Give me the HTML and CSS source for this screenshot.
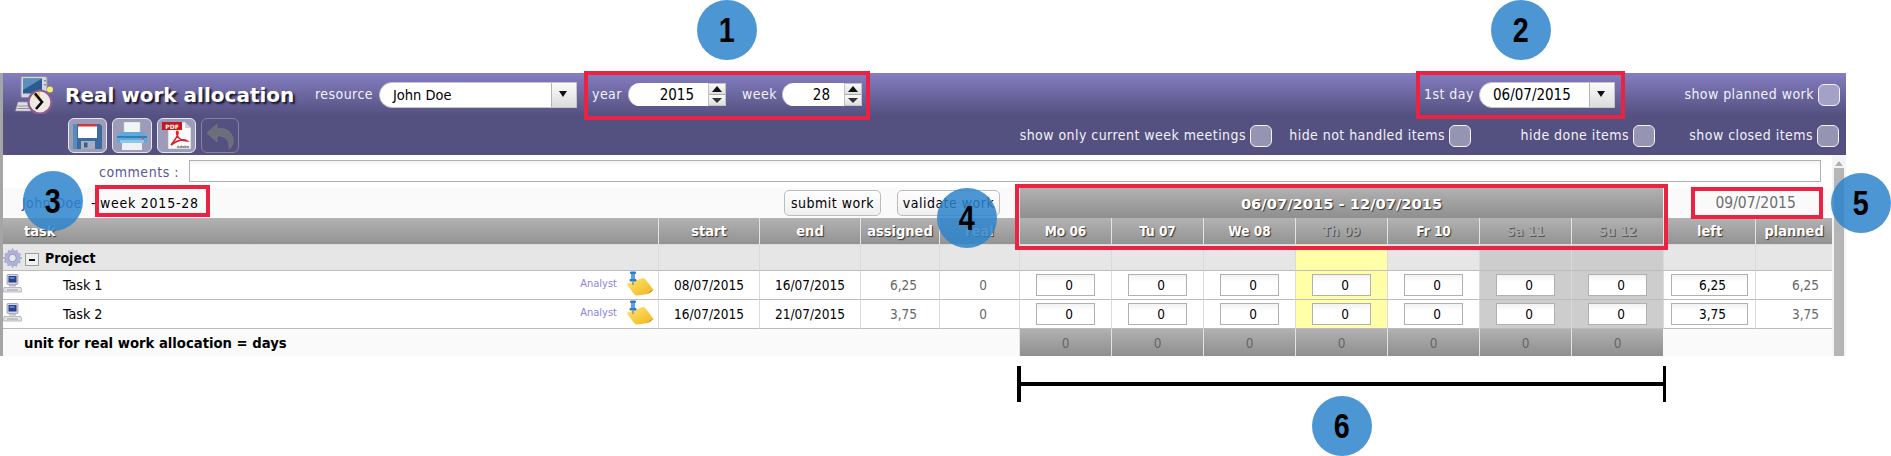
FILE: index.html
```html
<!DOCTYPE html>
<html lang="en">
<head>
<meta charset="utf-8">
<title>Real work allocation</title>
<link rel="stylesheet" href="styles.css">
</head>
<body>
<svg class="defs" width="0" height="0" aria-hidden="true">
  <defs>
    <linearGradient id="sheet" x1="0" y1="0" x2="1" y2="1">
      <stop offset="0" stop-color="#ffe873"/>
      <stop offset="1" stop-color="#f0b31a"/>
    </linearGradient>
    <symbol id="pc" viewBox="0 0 19 19">
      <rect x="4" y="0.500" width="11" height="10" rx="1" fill="#d4d4de" stroke="#8d8d9c" stroke-width=".7"/>
      <rect x="5.500" y="2" width="8" height="6.500" fill="#27408f"/>
      <rect x="6.500" y="3" width="5" height="2" fill="#5c84c4"/>
      <rect x="6" y="10.500" width="7" height="2" fill="#b9b9c4"/>
      <path d="M1 13.500 L18 13.500 L18.600 18 L0.400 18 Z" fill="#e4e4e8" stroke="#a0a0aa" stroke-width=".7"/>
      <path d="M4 16h11" stroke="#9b9ba6"/>
    </symbol>
    <symbol id="note" viewBox="0 0 28 25">
      <path d="M0.500 13 L17 7 Q19 7 20 9 L27.500 19 Q23 19 22 23 L11 24.500 Q9 24.500 8 23 Z" fill="url(#sheet)"/>
      <path d="M27.500 19 Q23 19 22 23 Q24 22 27.500 19 Z" fill="#c98d10"/>
      <rect x="4" y="0.500" width="6" height="2.500" rx="1" fill="#2f79c5"/>
      <rect x="5" y="3" width="4" height="5" fill="#5aa3e2"/>
      <rect x="3.500" y="8" width="7" height="2.500" rx="1" fill="#2f79c5"/>
      <path d="M7 10.500v3.500" stroke="#6d7c96" stroke-width="1.200"/>
    </symbol>
  </defs>
</svg>

<main class="screen">
  <header class="bar">
    <div class="bar-top">
      <svg class="app-icon" viewBox="0 0 38 38" aria-hidden="true">
        <rect x="6" y="0.500" width="26" height="21" rx="1.500" fill="#d5d5dc" stroke="#9393a2"/>
        <rect x="8" y="2.500" width="19" height="15" fill="#2a5c92"/>
        <path d="M8 2.500h19L8 14z" fill="#5d8fbd"/>
        <rect x="29" y="4" width="2" height="1.400" fill="#8a8a98"/>
        <rect x="29" y="8" width="2" height="1.400" fill="#8a8a98"/>
        <path d="M3 26 L17 26 L16 35 L0.500 35 Z" fill="#dedee4" stroke="#9a9aa8" stroke-width=".7"/>
        <path d="M3 30h11M2.500 32.500h12" stroke="#8f8f9c"/>
        <circle cx="25" cy="26" r="11.500" fill="#efe9e6" stroke="#8d5d90" stroke-width="2.200"/>
        <path d="M25 26 L25 16 A10 10 0 0 0 18 19 Z" fill="#f3d25a"/>
        <path d="M20 17.500 L27 26 L21 33" fill="none" stroke="#0b0b0b" stroke-width="2.600"/>
        <circle cx="35" cy="13.500" r="3" fill="#f6ec6a"/>
      </svg>
      <h1 class="title">Real work allocation</h1>
      <span class="lbl lbl-resource">resource</span>
      <div class="combo combo-resource"><span class="combo-text">John Doe</span><span class="combo-arrow"></span></div>
      <span class="lbl lbl-year">year</span>
      <div class="spin spin-year"><span class="spin-text">2015</span><span class="spin-btns"><span class="spin-up"></span><span class="spin-down"></span></span></div>
      <span class="lbl lbl-week">week</span>
      <div class="spin spin-week"><span class="spin-text">28</span><span class="spin-btns"><span class="spin-up"></span><span class="spin-down"></span></span></div>
      <span class="lbl lbl-first">1st day</span>
      <div class="combo combo-date"><span class="combo-text">06/07/2015</span><span class="combo-arrow"></span></div>
      <div class="check-group check-planned"><span class="lbl">show planned work</span><span class="check check-light"></span></div>
    </div>
    <div class="bar-bottom">
      <button class="tool tool-save" type="button" aria-label="save">
        <svg viewBox="0 0 29 26" width="29" height="26" aria-hidden="true">
          <path d="M0 1h27l2 2v23H0z" fill="#3b6a9e"/>
          <rect x="5" y="1" width="19" height="14" fill="#fdfdfd"/>
          <rect x="5" y="1" width="19" height="2.500" fill="#d8323a"/>
          <rect x="8" y="18" width="14" height="8" fill="#a9afba"/>
          <rect x="11" y="19.500" width="3.500" height="5" fill="#3a5f8c"/>
          <path d="M0 1h4v25H0z" fill="#5b8bbd"/>
        </svg>
      </button>
      <button class="tool tool-print" type="button" aria-label="print">
        <svg viewBox="0 0 30 28" width="30" height="28" aria-hidden="true">
          <rect x="7" y="0" width="16" height="11" fill="#f2f4f6" stroke="#c9ccd3" stroke-width=".6"/>
          <path d="M3 10h24l3 4v7H0v-7z" fill="#61a9dc"/>
          <path d="M0 14h30v2H0z" fill="#2f7fb8"/>
          <rect x="3" y="18" width="24" height="3" fill="#8ec6ec"/>
          <rect x="5" y="21" width="20" height="7" fill="#eef0f3"/>
          <rect x="25" y="15" width="2" height="2" fill="#e2493c"/>
        </svg>
      </button>
      <button class="tool tool-pdf" type="button" aria-label="pdf">
        <svg viewBox="0 0 30 29" width="30" height="29" aria-hidden="true">
          <path d="M6 1h17l6 6v21H6z" fill="#fbfbfb" stroke="#a6a6ae" stroke-width=".6"/>
          <path d="M23 1v6h6z" fill="#cfcfd6"/>
          <rect x="0" y="1" width="20" height="8" fill="#c8161d"/>
          <text x="10" y="7.600" class="pdf-text" text-anchor="middle">PDF</text>
          <path d="M9 24 C13 19 17 14 16 11 C15 9 14 11 15 14 C17 19 21 20 25 20 C22 18 16 19 9 24 Z" fill="none" stroke="#d8232a" stroke-width="1.600"/>
          <text x="21" y="27.300" class="adobe-text" text-anchor="middle">Adobe</text>
        </svg>
      </button>
      <button class="tool tool-undo" type="button" aria-label="undo">
        <svg viewBox="0 0 30 28" width="30" height="28" aria-hidden="true">
          <path d="M2 11 L12 2 L12 7 C22 5 29 11 28 21 C27 24 26 26 24 27 C25 19 21 13 12 14 L12 20 Z" fill="#6e6e7a" stroke="#7c7c8e" stroke-width=".6"/>
        </svg>
      </button>
      <div class="check-group check-meetings"><span class="lbl">show only current week meetings</span><span class="check"></span></div>
      <div class="check-group check-handled"><span class="lbl">hide not handled items</span><span class="check"></span></div>
      <div class="check-group check-done"><span class="lbl">hide done items</span><span class="check"></span></div>
      <div class="check-group check-closed"><span class="lbl">show closed items</span><span class="check"></span></div>
    </div>
  </header>

  <div class="body-row">
    <div class="content">
      <div class="comments">
        <label class="comments-label">comments :</label>
        <div class="comments-field"></div>
      </div>
      <table class="grid">
        <colgroup>
          <col class="c-task"><col class="c-date"><col class="c-date"><col class="c-assigned"><col class="c-real">
          <col class="c-day"><col class="c-day"><col class="c-day"><col class="c-day"><col class="c-day"><col class="c-day"><col class="c-day">
          <col class="c-day"><col class="c-planned">
        </colgroup>
        <tr class="row-caption">
          <td colspan="5" class="caption-cell">
            <div class="caption">
              <span class="who">John Doe</span><span class="dash">-</span><span class="week-name">week 2015-28</span>
              <button class="btn btn-submit" type="button">submit work</button>
              <button class="btn btn-validate" type="button">validate work</button>
            </div>
          </td>
          <td colspan="7" class="week-band">06/07/2015 - 12/07/2015</td>
          <td colspan="2" class="today">09/07/2015</td>
        </tr>
        <tr class="row-head">
          <th class="th-task">task</th><th>start</th><th>end</th><th>assigned</th><th>real</th>
          <th class="th-day">Mo 06</th><th class="th-day">Tu 07</th><th class="th-day">We 08</th><th class="th-day th-off">Th 09</th><th class="th-day">Fr 10</th><th class="th-day th-off">Sa 11</th><th class="th-day th-off">Su 12</th>
          <th>left</th><th>planned</th>
        </tr>
        <tr class="row-project">
          <td class="project-cell">
            <div class="project">
              <svg class="gear" viewBox="0 0 20 20" aria-hidden="true">
                <path d="M10 0l1.800 3 3-1.200.6 3.300 3.300.6L17 8.500l3 1.500-3 1.800 1.200 3-3.300.6-.6 3.300-3-1.200L10 20l-1.800-3-3 1.200-.6-3.300-3.300-.6 1.200-3L0 10l3-1.500-1.200-2.800 3.300-.6.600-3.300 3 1.200z" fill="#b0b2da" stroke="#8a8cb8" stroke-width=".5"/>
                <circle cx="10" cy="10" r="4" fill="#e6e6ee" stroke="#8f91bc"/>
              </svg>
              <span class="collapse"></span>
              <strong class="project-name">Project</strong>
            </div>
          </td>
          <td></td><td></td><td></td><td></td>
          <td></td><td></td><td></td><td class="today-col"></td><td></td><td class="off-col"></td><td class="off-col"></td>
          <td></td><td></td>
        </tr>
        <tr class="row-task">
          <td>
            <div class="task">
              <svg class="pc"><use href="#pc"/></svg>
              <span class="task-name">Task 1</span>
              <span class="role">Analyst</span>
              <svg class="note"><use href="#note"/></svg>
            </div>
          </td>
          <td class="date">08/07/2015</td><td class="date">16/07/2015</td>
          <td class="num num-assigned">6,25</td><td class="num num-real">0</td>
          <td><span class="cell-input">0</span></td><td><span class="cell-input">0</span></td><td><span class="cell-input">0</span></td>
          <td class="today-col"><span class="cell-input">0</span></td><td><span class="cell-input">0</span></td>
          <td class="off-col"><span class="cell-input">0</span></td><td class="off-col"><span class="cell-input">0</span></td>
          <td><span class="cell-input cell-left">6,25</span></td><td class="num num-planned">6,25</td>
        </tr>
        <tr class="row-task">
          <td>
            <div class="task">
              <svg class="pc"><use href="#pc"/></svg>
              <span class="task-name">Task 2</span>
              <span class="role">Analyst</span>
              <svg class="note"><use href="#note"/></svg>
            </div>
          </td>
          <td class="date">16/07/2015</td><td class="date">21/07/2015</td>
          <td class="num num-assigned">3,75</td><td class="num num-real">0</td>
          <td><span class="cell-input">0</span></td><td><span class="cell-input">0</span></td><td><span class="cell-input">0</span></td>
          <td class="today-col"><span class="cell-input">0</span></td><td><span class="cell-input">0</span></td>
          <td class="off-col"><span class="cell-input">0</span></td><td class="off-col"><span class="cell-input">0</span></td>
          <td><span class="cell-input cell-left">3,75</span></td><td class="num num-planned">3,75</td>
        </tr>
        <tr class="row-foot">
          <td colspan="5" class="unit">unit for real work allocation = days</td>
          <td class="sum">0</td><td class="sum">0</td><td class="sum">0</td><td class="sum">0</td><td class="sum">0</td><td class="sum">0</td><td class="sum">0</td>
          <td colspan="2"></td>
        </tr>
      </table>
    </div>
    <div class="scrollbar"><span class="scroll-up"></span><span class="scroll-thumb"></span></div>
  </div>
</main>

<div class="mark mark-1"></div>
<div class="mark mark-2"></div>
<div class="mark mark-3"></div>
<div class="mark mark-4"></div>
<div class="mark mark-5"></div>
<div class="bracket"></div>
<div class="dot dot-1"><span class="digit">1</span></div>
<div class="dot dot-2"><span class="digit">2</span></div>
<div class="dot dot-3"><span class="digit">3</span></div>
<div class="dot dot-4"><span class="digit">4</span></div>
<div class="dot dot-5"><span class="digit">5</span></div>
<div class="dot dot-6"><span class="digit">6</span></div>
</body>
</html>
```

FILE: styles.css
```css
html, body {
  margin: 0;
  padding: 0;
  background: #fff;
  width: 1891px;
  height: 456px;
  overflow: hidden;
}
body {
  position: relative;
  font-family: "DejaVu Sans Condensed", "DejaVu Sans", sans-serif;
  font-size: 14px;
  color: #000;
}
.defs { position: absolute; }

.screen {
  margin-top: 73px;
  width: 1843px;
  height: 283px;
  border-left: 3px solid #a5a5a5;
  box-sizing: content-box;
  display: flex;
  flex-direction: column;
}

/* header bar */
.bar {
  height: 82px;
  background: linear-gradient(#857dc1 0, #54507f 43px, #54507f 100%);
  color: #f1f1fa;
  flex: none;
}
.bar-top {
  height: 43px;
  display: flex;
  align-items: center;
  padding-left: 12px;
}
.bar-bottom {
  height: 39px;
  display: flex;
  align-items: center;
  padding-left: 65px;
}
.app-icon { width: 38px; height: 38px; flex: none; }
.title {
  margin: 0 0 0 12px;
  width: 228px;
  font-family: "DejaVu Sans", sans-serif;
  font-size: 20px;
  font-weight: bold;
  color: #fff;
  white-space: nowrap;
  text-shadow: 2px 2px 2px #15132e;
}
.lbl { white-space: nowrap; flex: none; font-size: 14px; letter-spacing: .45px; }
.lbl-resource { width: 57px; margin-left: 22px; margin-top: -2px; }
.lbl-year { width: 30px; margin-left: 15px; margin-top: -2px; }
.lbl-week { width: 33px; margin-left: 16px; margin-top: -2px; }
.lbl-first { width: 49px; margin-left: 562px; margin-top: -2px; }

.combo {
  height: 26px;
  box-sizing: border-box;
  display: flex;
  background: #fff;
  border: 1px solid #c6c6c6;
  border-radius: 13px 0 0 13px;
  color: #000;
  flex: none;
}
.combo-resource { width: 198px; margin-left: 7px; }
.combo-date { width: 136px; margin-left: 6px; }
.combo-text {
  flex: 1;
  padding-left: 13px;
  line-height: 25px;
  font-size: 14.500px;
}
.combo-date .combo-text { font-size: 15px; }
.combo-arrow {
  width: 24px;
  border-left: 1px solid #b5b5b5;
  background: linear-gradient(#fafafa, #dcdcdc);
  position: relative;
}
.combo-arrow::after {
  content: "";
  position: absolute;
  left: 7px;
  top: 8px;
  border: 4.500px solid transparent;
  border-top: 6px solid #111;
  border-bottom: 0;
}

.spin {
  height: 23px;
  display: flex;
  flex: none;
  color: #000;
}
.spin-year { width: 98px; margin-left: 6px; }
.spin-week { width: 80px; margin-left: 7px; }
.spin-text {
  flex: 1;
  background: #fff;
  border-radius: 12px 0 0 12px;
  border-left: 1px solid #c6c6c6;
  text-align: right;
  padding-right: 14px;
  line-height: 24px;
  font-size: 15px;
}
.spin-btns {
  width: 18px;
  display: flex;
  flex-direction: column;
  background: #d9d9d9;
  border: 1px solid #c2c2c2;
  box-sizing: border-box;
}
.spin-up, .spin-down { flex: 1; position: relative; background: linear-gradient(#fafafa, #dedede); }
.spin-down { border-top: 1px solid #aaa; }
.spin-up::after {
  content: "";
  position: absolute;
  left: 3px;
  top: 2px;
  border: 5px solid transparent;
  border-bottom: 6px solid #111;
  border-top: 0;
}
.spin-down::after {
  content: "";
  position: absolute;
  left: 3px;
  top: 3px;
  border: 5px solid transparent;
  border-top: 5px solid #333;
  border-bottom: 0;
}

.check-group {
  display: flex;
  align-items: center;
  justify-content: flex-end;
  gap: 4px;
  flex: none;
  height: 22px;
}
.check-group .lbl { margin-top: -1px; }
.check {
  width: 22px;
  height: 22px;
  box-sizing: border-box;
  border: 1px solid #f2f2f8;
  border-radius: 6px;
  background: #9594b3;
  flex: none;
}
.check-light { background: #a3a1c8; }
.check-planned { width: 156px; margin-left: 69px; }
.check-meetings { width: 253px; margin-left: 780px; }
.check-handled { width: 199px; }
.check-done { width: 184px; }
.check-closed { width: 184px; }

.tool {
  width: 39px;
  height: 35px;
  padding: 0;
  margin: 0 5px 0 0;
  border: 1px solid #e6e6f0;
  border-radius: 6px;
  background: #9d9cb8;
  display: flex;
  align-items: center;
  justify-content: center;
  flex: none;
}
.tool-print { width: 40px; }
.tool-undo { width: 38px; margin-right: 0; background: #54507f; border-color: #85839f; }
.pdf-text { font: bold 6px "DejaVu Sans", sans-serif; fill: #fff; }
.adobe-text { font: bold 3.500px "DejaVu Sans", sans-serif; fill: #666; }

/* content */
.body-row { flex: 1; display: flex; min-height: 0; }
.content { width: 1829px; flex: none; }
.comments {
  height: 33px;
  display: flex;
  padding: 5px 0 0 96px;
  box-sizing: border-box;
  background: #fff;
}
.comments-label {
  width: 90px;
  color: #555a95;
  font-size: 14px;
  letter-spacing: .55px;
  line-height: 24px;
  flex: none;
}
.comments-field {
  width: 1632px;
  height: 22px;
  box-sizing: border-box;
  border: 1px solid #b0b0b0;
  background: linear-gradient(#f3f3f3, #fff 6px);
}

.grid {
  table-layout: fixed;
  width: 1829px;
  border-collapse: separate;
  border-spacing: 0;
}
.c-task { width: 655px; }
.c-date { width: 101px; }
.c-assigned { width: 79px; }
.c-real { width: 80px; }
.c-day { width: 92px; }
.c-planned { width: 77px; }
.grid td, .grid th {
  padding: 0;
  box-sizing: border-box;
  white-space: nowrap;
}

.row-caption td { height: 30px; background: #fafafa; }
.caption { display: flex; align-items: center; padding-left: 19px; height: 30px; font-size: 14px; letter-spacing: .4px; }
.who { color: #47478f; width: 69px; }
.dash { width: 9px; }
.week-name { letter-spacing: .75px; }
.btn {
  font: 14px "DejaVu Sans Condensed", "DejaVu Sans", sans-serif;
  letter-spacing: .5px;
  height: 26px;
  padding: 0;
  background: linear-gradient(#fff, #efefef);
  border: 1px solid #bcbcbc;
  border-radius: 5px;
  color: #000;
  flex: none;
}
.btn-submit { width: 97px; margin-left: auto; }
.btn-validate { width: 103px; margin: 0 19px 0 16px; }
.grid .week-band {
  background: linear-gradient(#b1b1b1, #8f8f8f);
  border-left: 1px solid #e4e4e4;
  text-align: center;
  font-family: "DejaVu Sans", sans-serif;
  font-weight: bold;
  color: #fff;
  font-size: 14.700px;
  text-shadow: 1px 1px 1px #333;
}
.grid .today { text-align: center; color: #6e6e6e; font-size: 15.500px; padding-left: 16px; background: #fafafa; }

.row-head th {
  height: 27px;
  background: linear-gradient(#b2b2b2, #939393);
  border-left: 1px solid #e4e4e4;
  border-bottom: 1px solid #dcdcdc;
  font-weight: bold;
  font-size: 14.500px;
  color: #fff;
  text-shadow: 1px 1px 1px #333;
}
.row-head .th-day { font-size: 13.500px; }
.row-head .th-task { text-align: left; padding-left: 21px; border-left: 0; }
.row-head .th-off { color: #a8a8a8; text-shadow: 1px 1px 0 #555; }

.row-project td {
  height: 26px;
  background: #e6e6e6;
  border-left: 1px solid #dadada;
  border-bottom: 1px solid #bcbcbc;
}
.row-project .project-cell { border-left: 0; }
.project { display: flex; align-items: center; height: 25px; }
.gear { width: 19px; height: 20px; flex: none; }
.collapse {
  width: 14px;
  height: 13px;
  margin-left: 3px;
  margin-top: 3px;
  box-sizing: border-box;
  border: 1px solid #9e9e9e;
  background: #f0f0f0;
  position: relative;
  flex: none;
}
.collapse::after {
  content: "";
  position: absolute;
  left: 3px;
  top: 5px;
  width: 6px;
  height: 2px;
  background: #111;
}
.project-name { margin-left: 6px; font-size: 14px; }

.row-task td {
  height: 29px;
  background: #fff;
  border-left: 1px solid #dadada;
  border-bottom: 1px solid #bcbcbc;
}
.row-task td:first-child { border-left: 0; }
.row-project .today-col, .row-task .today-col { background: #ffffa8; }
.row-project .off-col, .row-task .off-col { background: #cdcdcd; }
.task { display: flex; align-items: center; height: 28px; padding-right: 4px; }
.pc { width: 19px; height: 19px; flex: none; margin-bottom: 4px; }
.task-name { margin-left: 41px; flex: 1; font-size: 14.200px; }
.role { color: #8a84e0; font-size: 11px; margin-bottom: 4px; }
.note { width: 28px; height: 25px; margin-left: 9px; flex: none; margin-bottom: 3px; }
.date { text-align: center; font-size: 13.500px; }
.num { text-align: right; color: #666; font-size: 13.500px; }
.num-assigned { padding-right: 22px !important; }
.num-real { padding-right: 32px !important; }
.num-planned { padding-right: 13px !important; }
.cell-input {
  display: block;
  width: 59px;
  height: 22px;
  margin-left: 16px;
  box-sizing: border-box;
  border: 1px solid #b0b0b0;
  background: linear-gradient(#f2f2f2, #fff 7px);
  text-align: right;
  padding-right: 21px;
  line-height: 21px;
  font-size: 13.500px;
}
.cell-left { width: 77px; margin-left: 7px; }

.row-foot td { height: 27px; background: #fafafa; }
.grid .unit { font-weight: bold; padding-left: 21px; font-size: 14.700px; }
.grid .sum {
  background: linear-gradient(#b1b1b1, #8f8f8f);
  border-left: 1px solid #e4e4e4;
  text-align: center;
  color: #666;
  font-size: 13.500px;
}

.scrollbar {
  width: 14px;
  flex: none;
  background: #f4f4f4;
  display: flex;
  flex-direction: column;
  align-items: center;
}
.scroll-up {
  margin-top: 6px;
  border: 4px solid transparent;
  border-bottom: 5px solid #b0b0b0;
  border-top: 0;
}
.scroll-thumb {
  margin-top: 2px;
  flex: 1;
  width: 10px;
  background: #b5b5b5;
}

/* annotation overlays */
.mark {
  position: absolute;
  box-sizing: border-box;
  border: 4px solid #ec2243;
}
.mark-1 { left: 584px; top: 71px; width: 286px; height: 49px; }
.mark-2 { left: 1416px; top: 71px; width: 209px; height: 48px; }
.mark-3 { left: 95px; top: 185px; width: 115px; height: 32px; }
.mark-4 { left: 1015px; top: 184px; width: 653px; height: 66px; }
.mark-5 { left: 1691px; top: 187px; width: 132px; height: 32px; }

.bracket {
  position: absolute;
  left: 1017px;
  top: 366px;
  width: 649px;
  height: 36px;
  box-sizing: border-box;
  border-left: 4px solid #000;
  border-right: 3px solid #000;
}
.bracket::before {
  content: "";
  position: absolute;
  left: 0;
  right: 0;
  top: 16px;
  height: 4px;
  background: #000;
}

.dot {
  position: absolute;
  width: 60px;
  height: 60px;
  border-radius: 50%;
  background: rgba(45, 132, 205, .85);
  color: #000;
  font: bold 35px/60px "Liberation Sans", sans-serif;
  text-align: center;
}
.digit { display: inline-block; transform: scaleX(.82); }
.dot-1 { left: 697px; top: 0; }
.dot-2 { left: 1491px; top: 0; }
.dot-3 { left: 23px; top: 171px; }
.dot-4 { left: 937px; top: 188px; }
.dot-5 { left: 1831px; top: 173px; }
.dot-6 { left: 1312px; top: 396px; }
```
